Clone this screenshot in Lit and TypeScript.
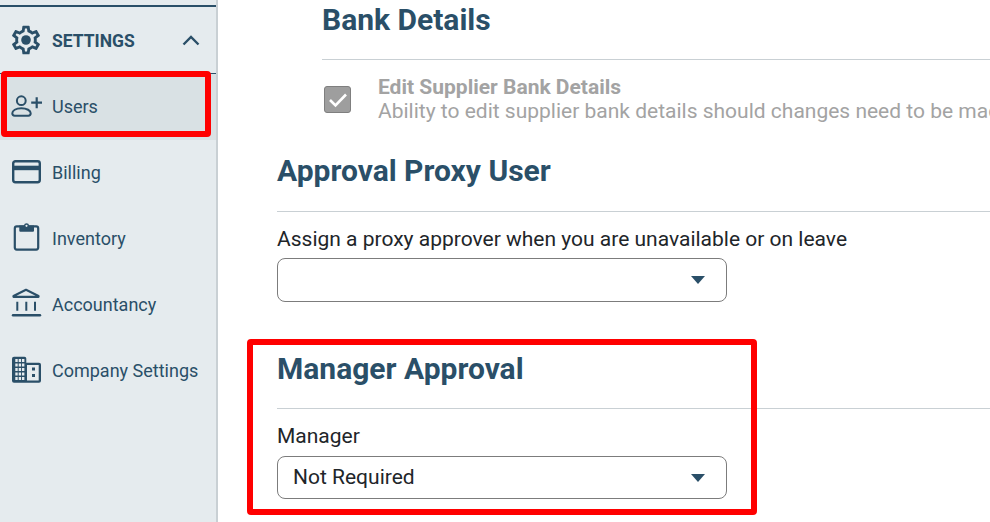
import { LitElement, html, css, svg } from "lit";
import { customElement } from "lit/decorators.js";

const gear = svg`<path fill="currentColor" transform="translate(-1.2 -1.2) scale(1.433)" d="M19.43 12.98c.04-.32.07-.64.07-.98 0-.34-.03-.66-.07-.98l2.11-1.65c.19-.15.24-.42.12-.64l-2-3.46c-.09-.16-.26-.25-.44-.25-.06 0-.12.01-.17.03l-2.49 1c-.52-.4-1.08-.73-1.69-.98l-.38-2.65C14.46 2.18 14.25 2 14 2h-4c-.25 0-.46.18-.49.42l-.38 2.65c-.61.25-1.17.59-1.69.98l-2.49-1c-.06-.02-.12-.03-.18-.03-.17 0-.34.09-.43.25l-2 3.46c-.13.22-.07.49.12.64l2.11 1.65c-.04.32-.07.65-.07.98 0 .33.03.66.07.98l-2.11 1.65c-.19.15-.24.42-.12.64l2 3.46c.09.16.26.25.44.25.06 0 .12-.01.17-.03l2.49-1c.52.4 1.08.73 1.69.98l.38 2.65c.03.24.24.42.49.42h4c.25 0 .46-.18.49-.42l.38-2.65c.61-.25 1.17-.59 1.69-.98l2.49 1c.06.02.12.03.18.03.17 0 .34-.09.43-.25l2-3.46c.12-.22.07-.49-.12-.64l-2.11-1.65zm-1.98-1.71c.04.31.05.52.05.73 0 .21-.02.43-.05.73l-.14 1.13.89.7 1.08.84-.7 1.21-1.27-.51-1.04-.42-.9.68c-.43.32-.84.56-1.25.73l-1.06.43-.16 1.13-.2 1.35h-1.4l-.19-1.35-.16-1.13-1.06-.43c-.43-.18-.83-.41-1.23-.71l-.91-.7-1.06.43-1.27.51-.7-1.21 1.08-.84.89-.7-.14-1.13c-.03-.31-.05-.54-.05-.74s.02-.43.05-.73l.14-1.13-.89-.7-1.08-.84.7-1.21 1.27.51 1.04.42.9-.68c.43-.32.84-.56 1.25-.73l1.06-.43.16-1.13.2-1.35h1.39l.19 1.35.16 1.13 1.06.43c.43.18.83.41 1.23.71l.91.7 1.06-.43 1.27-.51.7 1.21-1.07.85-.89.7.14 1.13z"/><circle cx="16" cy="16" r="4.800" fill="currentColor"/>`;

const userPlus = svg`<circle cx="11.300" cy="10.700" r="4.400" fill="none" stroke="currentColor" stroke-width="2"/><path d="M2.300 23.300c0-2.800 3.500-5 9-5s9.400 2.200 9.400 5c0 1.500-.9 2.400-2.400 2.400H4.700c-1.500 0-2.400-.9-2.400-2.400z" fill="none" stroke="currentColor" stroke-width="2"/><path d="M26.700 7.200v11M21.200 12.700h11" stroke="currentColor" stroke-width="2.200" fill="none"/>`;

const card = svg`<rect x="3.200" y="5.200" width="26.600" height="21" rx="2.200" fill="none" stroke="currentColor" stroke-width="2.400"/><rect x="3.200" y="9.700" width="26.600" height="4.500" fill="currentColor"/>`;

const clipboard = svg`<rect x="4.800" y="4.400" width="23.400" height="23.200" rx="2" fill="none" stroke="currentColor" stroke-width="2.200"/><path d="M9.300 3.400h4.600a2.700 2.700 0 0 1 5.300 0H24v5.300a1 1 0 0 1-1 1H10.300a1 1 0 0 1-1-1z" fill="currentColor"/><circle cx="16.500" cy="3.800" r="1.100" fill="#e5ebee"/>`;

const bank = svg`<path d="M3.500 8 16 1.800 28.500 8v.8h-25z" fill="none" stroke="currentColor" stroke-width="2.200" stroke-linejoin="round"/><path d="M7.300 13.700v9M16.300 13.700v9M25 13.700v9" stroke="currentColor" stroke-width="2" fill="none"/><path d="M3 27.300h27" stroke="currentColor" stroke-width="2.400" stroke-linecap="round" fill="none"/>`;

const cellsX = [5.3, 8.7, 12];
const cellsY = [5, 9.500, 14, 18.500, 23];
const building = svg`<path fill="currentColor" d="M4 2.700h10.500a1.800 1.800 0 0 1 1.800 1.800v4.200H29a2 2 0 0 1 2 2v16a2 2 0 0 1-2 2H4a2 2 0 0 1-2-2v-22a2 2 0 0 1 2-2z"/>
  ${cellsY.map((y) => cellsX.map((x) => svg`<rect x=${x} y=${y} width="2.400" height="3" fill="#e5ebee"/>`))}
  <rect x="17" y="11" width="11.700" height="15.500" fill="#e5ebee"/>
  <rect x="22" y="13.500" width="3" height="3" fill="currentColor"/>
  <rect x="22" y="20" width="3" height="3" fill="currentColor"/>`;

const items = [
  { label: "Users", icon: userPlus, active: true },
  { label: "Billing", icon: card, active: false },
  { label: "Inventory", icon: clipboard, active: false },
  { label: "Accountancy", icon: bank, active: false },
  { label: "Company Settings", icon: building, active: false },
];

@customElement("app-root")
export class AppRoot extends LitElement {
  static styles = css`
    :host {
      display: flex;
      position: relative;
      width: 990px;
      height: 522px;
      overflow: hidden;
      background: #fff;
      font-family: Roboto, "Liberation Sans", sans-serif;
      color: #212529;
    }
    .side {
      flex: 0 0 216px;
      background: #e5ebee;
      border-right: 2px solid #c9d0d4;
      color: #2a4f68;
      padding-top: 5px;
    }
    .head {
      height: 66px;
      border-top: 2px solid #2a4f68;
      border-bottom: 1px solid #2a4f68;
      display: flex;
      align-items: center;
      padding: 0 16px 0 10px;
      gap: 10px;
    }
    .head .t {
      font-weight: 700;
      font-size: 17.500px;
      flex: 1;
      margin-top: 2px;
    }
    svg.ic {
      width: 32px;
      height: 32px;
      flex: none;
    }
    .row {
      height: 66px;
      display: flex;
      align-items: center;
      gap: 10px;
      padding-left: 10px;
      font-size: 18px;
      box-sizing: border-box;
    }
    .row svg.ic,
    .row span {
      margin-bottom: 2px;
    }
    .row.active {
      background: #d9e1e4;
    }
    .main {
      flex: 1;
      min-width: 0;
      padding-left: 59px;
      display: flex;
      flex-direction: column;
    }
    h2 {
      margin: 0;
      font-size: 30px;
      font-weight: 700;
      line-height: 40px;
      color: #2a4f68;
      white-space: nowrap;
    }
    .rule {
      height: 1px;
      background: #c9d0d4;
    }
    .bank {
      padding-left: 45px;
    }
    .bank .rule {
      margin-top: 19px;
    }
    .check {
      display: flex;
      gap: 27px;
      margin-top: 15px;
      color: #a3a3a3;
      font-size: 21px;
      line-height: 24px;
      white-space: nowrap;
    }
    .box {
      width: 25px;
      height: 25px;
      margin-top: 11px;
      margin-left: 2px;
      background: #9e9e9e;
      border: 1px solid #7f7f7f;
      border-radius: 3px;
      flex: none;
      display: grid;
      place-items: center;
    }
    .box svg {
      width: 20px;
      height: 20px;
    }
    .check b {
      display: block;
      font-weight: 700;
    }
    .section-a {
      margin-top: 28px;
    }
    .section-a .rule {
      margin-top: 20px;
    }
    label {
      display: block;
      font-size: 21px;
      line-height: 24px;
      margin-top: 15px;
    }
    .select {
      width: 450px;
      height: 44px;
      box-sizing: border-box;
      margin-top: 7px;
      border: 1px solid #7c7c7c;
      border-radius: 8px;
      display: flex;
      align-items: center;
      justify-content: space-between;
      padding: 0 21px 0 15px;
      font-size: 21px;
      color: #212529;
    }
    .select span {
      margin-bottom: 2px;
    }
    .caret {
      width: 0;
      height: 0;
      border-left: 7.500px solid transparent;
      border-right: 7.500px solid transparent;
      border-top: 8px solid #2a4f68;
    }
    .section-b {
      margin-top: 47px;
    }
    .section-b .rule {
      margin-top: 19px;
    }
    .section-b .select {
      height: 43px;
      margin-top: 8px;
    }
    .mark {
      position: absolute;
      box-sizing: border-box;
      border: 6px solid #ff0000;
      border-radius: 4px;
      pointer-events: none;
    }
    .m1 {
      left: 1px;
      top: 71px;
      width: 210px;
      height: 66px;
    }
    .m2 {
      left: 247px;
      top: 339px;
      width: 510px;
      height: 176px;
    }
  `;

  render() {
    return html`
      <aside class="side">
        <div class="head">
          <svg class="ic" viewBox="0 0 32 32">${gear}</svg>
          <span class="t">SETTINGS</span>
          <svg width="18" height="11" viewBox="0 0 18 11"><path d="M1.500 9.500 9 2l7.500 7.500" fill="none" stroke="currentColor" stroke-width="2.400"/></svg>
        </div>
        ${items.map(
          (i) => html`<div class="row ${i.active ? "active" : ""}">
            <svg class="ic" viewBox="0 0 32 32">${i.icon}</svg>
            <span>${i.label}</span>
          </div>`
        )}
      </aside>
      <main class="main">
        <section class="bank">
          <h2>Bank Details</h2>
          <div class="rule"></div>
          <div class="check">
            <div class="box">
              <svg viewBox="0 0 20 20"><path d="M2 10 7.500 15.500 18 4.500" fill="none" stroke="#fff" stroke-width="2.600"/></svg>
            </div>
            <div>
              <b>Edit Supplier Bank Details</b>
              <span>Ability to edit supplier bank details should changes need to be made</span>
            </div>
          </div>
        </section>
        <section class="section-a">
          <h2>Approval Proxy User</h2>
          <div class="rule"></div>
          <label>Assign a proxy approver when you are unavailable or on leave</label>
          <div class="select"><span></span><i class="caret"></i></div>
        </section>
        <section class="section-b">
          <h2>Manager Approval</h2>
          <div class="rule"></div>
          <label>Manager</label>
          <div class="select"><span>Not Required</span><i class="caret"></i></div>
        </section>
      </main>
      <div class="mark m1"></div>
      <div class="mark m2"></div>
    `;
  }
}
